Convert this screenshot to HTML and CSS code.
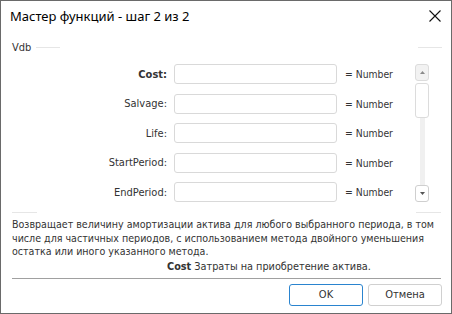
FILE: index.html
```html
<!DOCTYPE html>
<html lang="ru">
<head>
<meta charset="utf-8">
<link rel="stylesheet" href="styles.css">
</head>
<body>
<div class="window">
  <div class="titlebar">
    <span class="title">Мастер функций - шаг 2 из 2</span>
    <svg class="close" width="12" height="12" viewBox="0 0 12 12"><path d="M0.5 0.5 L11.5 11.5 M11.5 0.5 L0.5 11.5" stroke="#111" stroke-width="1.1" fill="none"/></svg>
  </div>
  <div class="group-head">
    <span class="group-label">Vdb</span>
    <span class="gline"></span>
    <span class="spacer"></span>
    <span class="gline"></span>
  </div>
  <div class="params">
    <div class="rows">
      <div class="row"><label class="lbl bold">Cost:</label><div class="input"></div><span class="type">= Number</span></div>
      <div class="row"><label class="lbl">Salvage:</label><div class="input"></div><span class="type">= Number</span></div>
      <div class="row"><label class="lbl">Life:</label><div class="input"></div><span class="type">= Number</span></div>
      <div class="row"><label class="lbl">StartPeriod:</label><div class="input"></div><span class="type">= Number</span></div>
      <div class="row"><label class="lbl">EndPeriod:</label><div class="input"></div><span class="type">= Number</span></div>
    </div>
    <div class="scrollbar">
      <div class="sbtn up"><svg width="5" height="3" viewBox="0 0 5 3"><path d="M2.5 0 L5 3 L0 3 Z" fill="#8a8a8a"/></svg></div>
      <div class="thumb"></div>
      <div class="track"></div>
      <div class="sbtn down"><svg width="5" height="3" viewBox="0 0 5 3"><path d="M0 0 L5 0 L2.5 3 Z" fill="#555"/></svg></div>
    </div>
  </div>
  <div class="group-foot">
    <span class="fline"></span>
    <span class="fline"></span>
  </div>
  <p class="desc">Возвращает величину амортизации актива для любого выбранного периода, в том числе для частичных периодов, с использованием метода двойного уменьшения остатка или иного указанного метода.</p>
  <p class="argdesc"><b>Cost</b> Затраты на приобретение актива.</p>
  <div class="sep"></div>
  <div class="buttons">
    <button class="btn primary">OK</button>
    <button class="btn">Отмена</button>
  </div>
</div>
</body>
</html>
```
FILE: styles.css
```css
html, body {
  margin: 0;
  padding: 0;
  background: #ffffff;
}
body {
  font-family: "DejaVu Sans Condensed", "Noto Sans", sans-serif;
  font-size: 11px;
  color: #333333;
}
.window {
  width: 452px;
  height: 314px;
  box-sizing: border-box;
  border: 1px solid #6a6a6a;
  background: #ffffff;
  display: flex;
  flex-direction: column;
}
.titlebar {
  height: 29px;
  display: flex;
  align-items: center;
  justify-content: space-between;
  padding: 0 10px 0 9px;
}
.title {
  font-family: "Noto Sans", sans-serif;
  font-size: 13px;
  color: #000000;
}
.close {
  display: block;
}
.group-head {
  display: flex;
  align-items: center;
  height: 16px;
  margin-top: 9px;
  padding: 0 9px 0 11px;
}
.group-label {
  color: #333;
}
.gline {
  width: 24px;
  height: 1px;
  background: #e6e6e6;
  margin-left: 5px;
}
.spacer {
  flex: 1;
}
.params {
  display: flex;
  margin-top: 9px;
  padding-right: 22px;
}
.rows {
  display: flex;
  flex-direction: column;
  gap: 9.5px;
  width: 414px;
}
.row {
  display: flex;
  align-items: center;
  height: 20px;
}
.lbl {
  width: 166px;
  text-align: right;
  box-sizing: border-box;
}
.lbl.bold {
  font-weight: bold;
}
.input {
  margin-left: 7px;
  width: 163px;
  height: 20px;
  box-sizing: border-box;
  border: 1px solid #d9d9d9;
  border-radius: 3px;
  background: #fff;
}
.type {
  margin-left: 8px;
  font-size: 10.3px;
}
.scrollbar {
  width: 14px;
  display: flex;
  flex-direction: column;
  align-items: center;
  height: 138px;
}
.sbtn {
  width: 14px;
  height: 17px;
  box-sizing: border-box;
  border: 1px solid #dcdcdc;
  border-radius: 3px;
  display: flex;
  align-items: center;
  justify-content: center;
}
.sbtn.up {
  background: #f2f2f2;
}
.sbtn.down {
  background: #ffffff;
  border-color: #cfcfcf;
}
.thumb {
  width: 14px;
  height: 35px;
  box-sizing: border-box;
  border: 1px solid #dcdcdc;
  border-radius: 3px;
  margin-top: 2px;
  background: #fff;
}
.track {
  flex: 1;
  width: 5px;
  background: #f0f0f0;
}
.group-foot {
  display: flex;
  justify-content: space-between;
  height: 1px;
  margin: 10px 10px 0 11px;
}
.fline {
  width: 25px;
  height: 1px;
  background: #e6e6e6;
}
.desc {
  margin: 5px 12px 0 11px;
  font-size: 10.6px;
  line-height: 13.5px;
}
.argdesc {
  margin: 1.5px 0 0 166px;
  font-size: 10.8px;
  line-height: 14px;
}
.argdesc b {
  font-weight: bold;
}
.sep {
  margin: 3.5px 10px 0 11px;
  height: 1px;
  background: #a0a0a0;
}
.buttons {
  display: flex;
  justify-content: flex-end;
  gap: 5px;
  padding: 5px 9px 0 0;
}
.btn {
  width: 74px;
  height: 22px;
  box-sizing: border-box;
  border: 1px solid #d0d0d0;
  border-radius: 3px;
  background: #ffffff;
  font-family: "DejaVu Sans Condensed", "Noto Sans", sans-serif;
  font-size: 11px;
  color: #333;
  padding: 0;
}
.btn.primary {
  border-color: #2a84cf;
}
```
